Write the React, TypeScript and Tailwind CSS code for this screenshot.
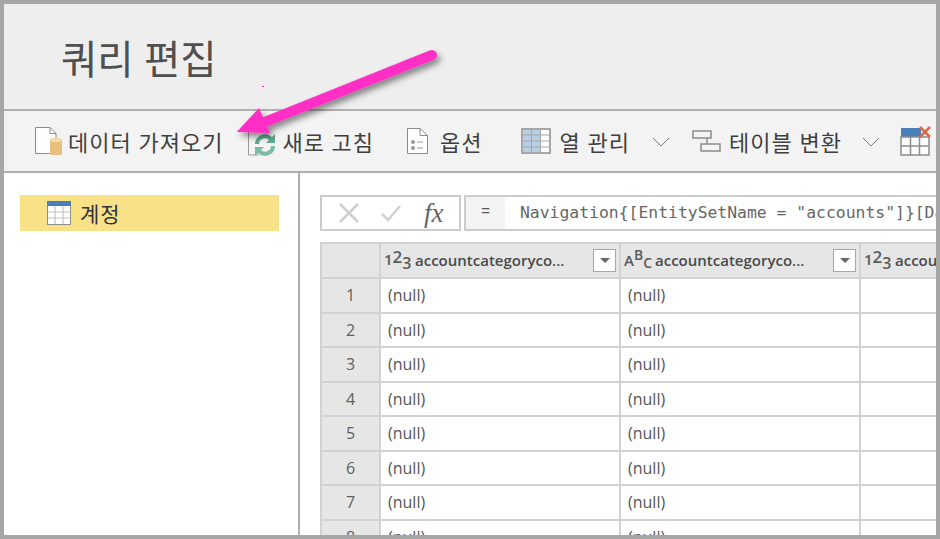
const KR = "font-['Open_Sans','Noto_Sans_CJK_KR',sans-serif]";
const rows = [1, 2, 3, 4, 5, 6, 7, 8];

const GetDataIcon = () => (
  <svg width="30" height="30" viewBox="0 0 30 30" className="shrink-0">
    <path d="M2.500 1.500H17L23 7.500V27.500H2.500Z" fill="#fff" stroke="#8c8c8c" />
    <path d="M17 1.500V7.500H23" fill="none" stroke="#8c8c8c" />
    <path d="M17 14c0-3 12-3 12 0V28c0 1.500-12 1.500-12 0Z" fill="#e8bf7c" />
    <ellipse cx="23" cy="14" rx="6" ry="2" fill="#f3dcb0" />
  </svg>
);

const RefreshIcon = () => (
  <svg width="30" height="30" viewBox="0 0 30 30" className="shrink-0">
    <path d="M12 28H1.500V1.500H14" fill="#f3f3f3" stroke="#999" />
    <path d="M10 17a8 8 0 0 1 14-5" fill="none" stroke="#5fa98f" strokeWidth="4" />
    <path d="M28 7v9h-9Z" fill="#5fa98f" />
    <path d="M26 19a8 8 0 0 1-14 5" fill="none" stroke="#79bba3" strokeWidth="4" />
    <path d="M8 29v-9h9Z" fill="#79bba3" />
  </svg>
);

const OptionsIcon = () => (
  <svg width="24" height="30" viewBox="0 0 24 30" className="shrink-0">
    <path d="M1.500 2.500H14L21.500 9.500V27.500H1.500Z" fill="#fff" stroke="#8c8c8c" />
    <path d="M14 2.500V9.500H21.500" fill="none" stroke="#8c8c8c" />
    <circle cx="7" cy="16" r="2" fill="#999" />
    <circle cx="7" cy="22" r="2" fill="#999" />
    <path d="M11 16h6M11 22h6" stroke="#999" />
  </svg>
);

const ColumnsIcon = () => (
  <svg width="30" height="26" viewBox="0 0 30 26" className="shrink-0">
    <rect x="1" y="1" width="28" height="24" fill="#fff" stroke="#8c8c8c" strokeWidth="1.500" />
    <rect x="2" y="2" width="17" height="22" fill="#b9cfe6" />
    <path d="M10.500 1v24M19.500 1v24M1 7h28M1 13h28M1 19h28" stroke="#a6a6a6" />
  </svg>
);

const TransformIcon = () => (
  <svg width="30" height="22" viewBox="0 0 30 22" className="shrink-0">
    <path d="M15 8v6" stroke="#8c8c8c" strokeWidth="1.500" />
    <rect x="1" y="1" width="18" height="7" fill="#f3f3f3" stroke="#8c8c8c" strokeWidth="1.500" />
    <rect x="9" y="14" width="19" height="7" fill="#f3f3f3" stroke="#8c8c8c" strokeWidth="1.500" />
  </svg>
);

const DeleteTableIcon = () => (
  <svg width="32" height="30" viewBox="0 0 32 30" className="shrink-0">
    <rect x="1" y="2" width="20" height="9" fill="#4a7fb8" />
    <rect x="1" y="11" width="28" height="18" fill="#fff" stroke="#8c8c8c" strokeWidth="1.500" />
    <path d="M10.500 11v18M19.500 11v18M1 20h28" stroke="#8c8c8c" strokeWidth="1.500" />
    <path d="M20 1l10 10M30 1L20 11" stroke="#d9694a" strokeWidth="2.500" />
  </svg>
);

const TableIcon = () => (
  <svg width="24" height="24" viewBox="0 0 24 24" className="shrink-0">
    <rect x="0.500" y="0.500" width="23" height="23" fill="#fff" stroke="#8c8c8c" />
    <rect x="0" y="0" width="24" height="5" fill="#4a7fb8" />
    <path d="M8 5v18M16 5v18M1 11h22M1 17h22" stroke="#c4c4c4" strokeWidth="1.200" />
  </svg>
);

const Chevron = () => (
  <svg width="18" height="10" viewBox="0 0 18 10" className="shrink-0">
    <path d="M1 1l8 8 8-8" fill="none" stroke="#7a7a7a" />
  </svg>
);

const HeaderCell = ({ kind, name, width, filter }: { kind: string; name: string; width: string; filter?: boolean }) => (
  <div className={`${width} shrink-0 h-full flex items-center border-r-2 border-[#d2d2d2] pl-[3px] pr-[3px]`}>
    {kind === "num" ? (
      <span className="w-[30px] shrink-0 text-[#5a5a5a] text-[15px] font-semibold leading-none flex items-start font-['Open_Sans',sans-serif]">
        1<span className="relative -top-[4px] text-[17px]">2</span>
        <span className="relative top-[3px] text-[16px]">3</span>
      </span>
    ) : (
      <span className="w-[30px] shrink-0 text-[#5a5a5a] text-[15px] font-semibold leading-none flex items-start font-['Open_Sans',sans-serif]">
        A<span className="relative -top-[5px] text-[14px]">B</span>
        <span className="relative top-[3px] text-[14px]">C</span>
      </span>
    )}
    <span className="ml-[1px] text-[15px] font-semibold text-[#4a4a4a] whitespace-nowrap overflow-hidden flex-1 font-['Open_Sans',sans-serif]">
      {name}
    </span>
    {filter && (
      <span className="w-[23px] h-[23px] shrink-0 bg-white border border-[#a6a6a6] flex items-center justify-center">
        <span className="w-0 h-0 border-x-[5px] border-x-transparent border-t-[5px] border-t-[#666]" />
      </span>
    )}
  </div>
);

export default function App() {
  return (
    <div className={`relative w-[940px] h-[539px] overflow-hidden bg-white border-4 border-[#a6a6a6] flex flex-col ${KR}`}>
      {/* title */}
      <div className="h-[105px] shrink-0 bg-[#eeeeee] pl-[57px] pt-[31px]">
        <h1 className="text-[39.500px] leading-[48px] text-[#4f4f4f] font-normal whitespace-nowrap">쿼리 편집</h1>
      </div>

      {/* toolbar */}
      <div className="h-[64px] shrink-0 bg-[#f3f3f3] border-y-2 border-[#b0b0b0] flex items-center pl-[29px] whitespace-nowrap text-[22px] tracking-[1px] text-[#3f3f3f]">
        <GetDataIcon />
        <span className="ml-[5px] mt-[3px]">데이터 가져오기</span>
        <div className="ml-[24px] mt-[2px]">
          <RefreshIcon />
        </div>
        <span className="ml-[5px] mt-[3px]">새로 고침</span>
        <div className="ml-[32px]">
          <OptionsIcon />
        </div>
        <span className="ml-[10px] mt-[3px]">옵션</span>
        <div className="ml-[38px]">
          <ColumnsIcon />
        </div>
        <span className="ml-[9px] mt-[3px]">열 관리</span>
        <div className="ml-[22px] mt-[2px]">
          <Chevron />
        </div>
        <div className="ml-[22px]">
          <TransformIcon />
        </div>
        <span className="ml-[7px] mt-[3px]">테이블 변환</span>
        <div className="ml-[20px] mt-[2px]">
          <Chevron />
        </div>
        <div className="ml-[20px]">
          <DeleteTableIcon />
        </div>
      </div>

      <div className="flex-1 flex min-h-0">
        {/* queries */}
        <div className="w-[296px] shrink-0 border-r-2 border-[#b0b0b0] pl-[16px] pr-[19px] pt-[22px]">
          <div className="h-[36px] bg-[#f8e187] flex items-center pl-[27px] gap-[9px]">
            <TableIcon />
            <span className="text-[21px] tracking-[1px] text-[#333] mt-[3px]">계정</span>
          </div>
        </div>

        {/* data */}
        <div className="flex-1 min-w-0 pl-[20px] pt-[22px] overflow-hidden">
          <div className="flex h-[36px] gap-[3px]">
            <div className="w-[141px] shrink-0 bg-white border-2 border-[#cccccc] flex items-center pl-[15px]">
              <svg width="26" height="22" viewBox="0 0 26 22">
                <path d="M3 2l18 18M21 2L3 20" stroke="#cfcfcf" strokeWidth="2.500" />
              </svg>
              <svg width="24" height="20" viewBox="0 0 24 20" className="ml-[17px]">
                <path d="M2 11l6 6L20 3" fill="none" stroke="#d0d0d0" strokeWidth="2.500" />
              </svg>
              <span className="ml-[20px] font-['Liberation_Serif',serif] italic text-[27px] leading-none text-[#666]">fx</span>
            </div>
            <div className="flex-1 min-w-0 bg-white border-y-2 border-l-2 border-[#cccccc] flex overflow-hidden">
              <div className="w-[39px] shrink-0 bg-[#f3f3f3] flex items-center justify-center font-['Liberation_Mono',monospace] text-[15px] text-[#555]">
                =
              </div>
              <div className="pl-[15px] flex items-center whitespace-nowrap font-['DejaVu_Sans_Mono',monospace] text-[16.400px] text-[#666]">
                Navigation{'{'}[EntitySetName = "accounts"]{'}'}[Data]
              </div>
            </div>
          </div>

          {/* grid */}
          <div className="mt-[11px] border-l-2 border-[#d2d2d2]">
            <div className="h-[37px] flex bg-[#e6e6e6] border-y-2 border-[#d2d2d2] whitespace-nowrap">
              <div className="w-[59px] shrink-0 h-full border-r-2 border-[#d2d2d2]" />
              <HeaderCell kind="num" name="accountcategoryco..." width="w-[240px]" filter />
              <HeaderCell kind="abc" name="accountcategoryco..." width="w-[240px]" filter />
              <HeaderCell kind="num" name="accountclassificatio" width="w-[240px]" />
            </div>
            {rows.map((row) => (
              <div key={row} className="h-[34.500px] flex border-b-2 border-[#d2d2d2] text-[16px] text-[#555]">
                <div className="w-[59px] shrink-0 bg-[#e6e6e6] border-r-2 border-[#d2d2d2] flex items-center justify-center text-[#5f5f5f]">
                  {row}
                </div>
                <div className="w-[240px] shrink-0 border-r-2 border-[#d2d2d2] flex items-center pl-[7px]">(null)</div>
                <div className="w-[240px] shrink-0 border-r-2 border-[#d2d2d2] flex items-center pl-[7px]">(null)</div>
                <div className="w-[240px] shrink-0" />
              </div>
            ))}
          </div>
        </div>
      </div>

      {/* callout arrow */}
      <svg width="240" height="110" viewBox="0 0 240 110" className="absolute left-[226px] top-[42px] pointer-events-none">
        <defs>
          <filter id="arrowShadow" x="-20%" y="-20%" width="140%" height="150%">
            <feDropShadow dx="3" dy="4" stdDeviation="3" floodColor="#000" floodOpacity="0.45" />
          </filter>
        </defs>
        <rect x="32" y="40" width="2" height="1" fill="#ff2fc4" />
        <g filter="url(#arrowShadow)" fill="#ff2fc4">
          <path d="M6.700 86L29 62L40 87Z" />
          <path d="M35 76L202 9" stroke="#ff2fc4" strokeWidth="10" strokeLinecap="round" />
        </g>
      </svg>
    </div>
  );
}
